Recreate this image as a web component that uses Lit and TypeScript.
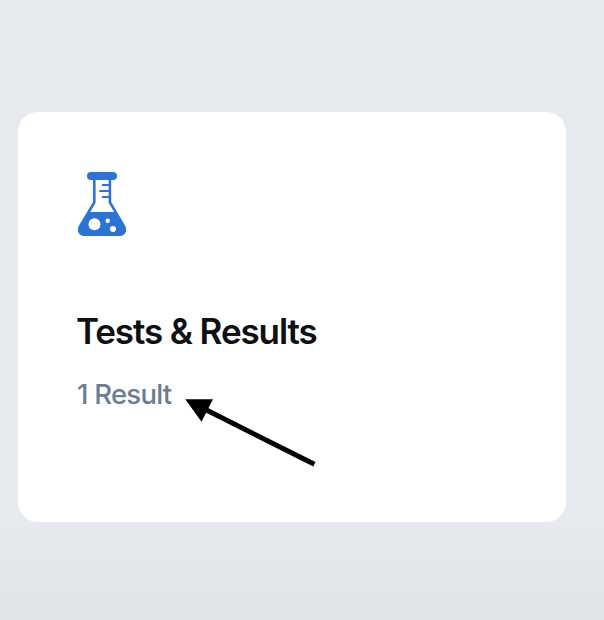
import { LitElement, html, css } from "lit";
import { customElement } from "lit/decorators.js";

@customElement("app-root")
export class AppRoot extends LitElement {
  static styles = css`
    :host {
      display: block;
      box-sizing: border-box;
      height: 620px;
      padding: 112px 38px 0 18px;
      overflow: hidden;
      background: linear-gradient(#e6eaef 0, #e6eaef 530px, #e0e4e8 620px);
      font-family: Inter, "Liberation Sans", sans-serif;
    }
    .card {
      position: relative;
      box-sizing: border-box;
      height: 410px;
      padding: 60px;
      border-radius: 20px;
      background: #fff;
    }
    .flask {
      display: block;
      width: 48px;
      height: 64px;
    }
    .title {
      margin: 73px 0 0 -2px;
      font-size: 35px;
      line-height: 44px;
      font-weight: 600;
      letter-spacing: -1.1px;
      color: #0e1012;
      white-space: nowrap;
    }
    .count {
      margin: 23px 0 0 -1px;
      font-size: 27.5px;
      line-height: 36px;
      font-weight: 500;
      letter-spacing: -0.75px;
      color: #6b7d92;
      white-space: nowrap;
    }
    .arrow {
      position: absolute;
      left: 162px;
      top: 283px;
      width: 140px;
      height: 76px;
    }
  `;

  render() {
    return html`
      <section class="card">
        <svg class="flask" viewBox="0 0 48 64" aria-hidden="true">
          <rect x="9" y="0" width="30" height="8" rx="4" fill="#2b74d4" />
          <path
            d="M15 7H17.6V30.8L12.2 40H36.2L30.6 30.8V7H33.2V30L47 53.4C50 58.8 47 64 41.5 64H6.5C1 64 -2 58.8 1 53.4L15 30Z"
            fill="#2b74d4"
          />
          <path d="M24 13H31M21.4 19H31M24 25H31" stroke="#2b74d4" stroke-width="2" />
          <circle cx="16.5" cy="52.3" r="6" fill="#fff" />
          <circle cx="29.7" cy="48.8" r="2.2" fill="#fff" />
          <circle cx="35" cy="57" r="3" fill="#fff" />
        </svg>
        <h2 class="title">Tests &amp; Results</h2>
        <p class="count">1 Result</p>
        <svg class="arrow" viewBox="180 395 140 76" aria-hidden="true">
          <path d="M204 408.8L314.4 464.3" stroke="#000" stroke-width="5" />
          <path d="M185.3 399.3H213L201.5 421.7Z" />
        </svg>
      </section>
    `;
  }
}
